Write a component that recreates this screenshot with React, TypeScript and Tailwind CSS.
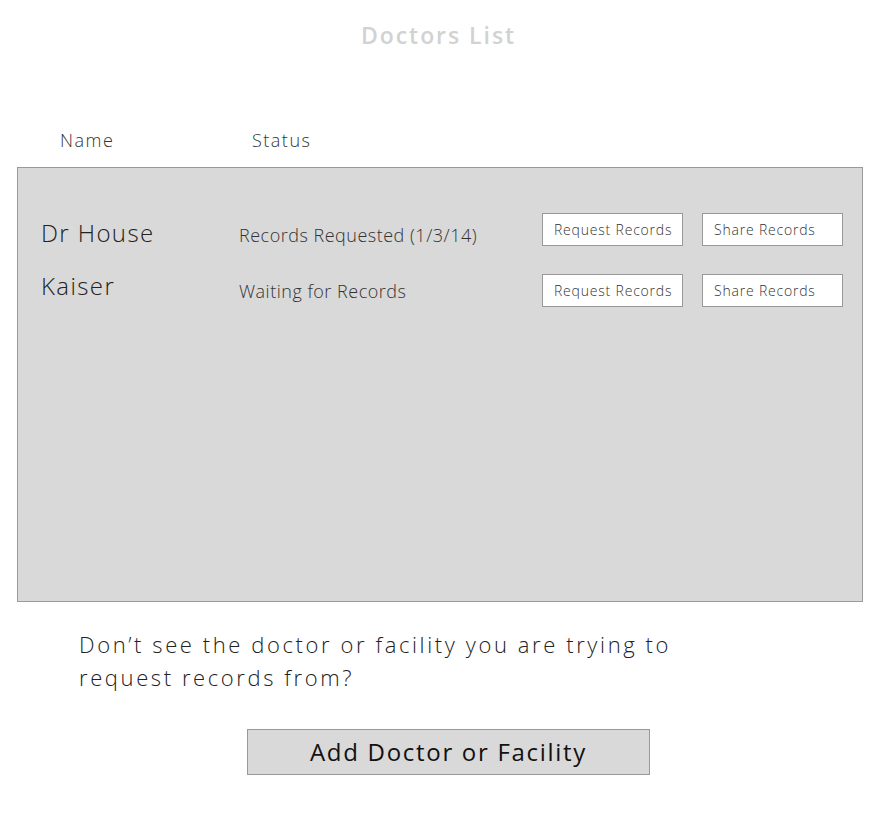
const doctors = [
  { name: "Dr House", status: "Records Requested (1/3/14)", nameCls: "pt-[6px]", statusCls: "pt-[12px]" },
  { name: "Kaiser", status: "Waiting for Records", nameCls: "pb-[10px]", statusCls: "pt-[2px]" },
];

function SmallButton({ label }: { label: string }) {
  return (
    <button className="h-[33px] w-[141px] shrink-0 border border-[#999999] bg-white pl-[11px] text-left text-[14px] tracking-[0.8px] text-[#333333]">
      {label}
    </button>
  );
}

export default function App() {
  return (
    <div className="min-h-[840px] w-[877px] bg-white font-['Open_Sans',sans-serif] font-light text-[#222222]">
      <h1 className="pt-[18px] text-center text-[23px] font-semibold leading-[34px] tracking-[1.95px] text-[#d2d2d2]">
        Doctors List
      </h1>

      <div className="mt-[74px] flex h-[28px] items-center text-[18px] tracking-[1.5px] text-[#333333]">
        <span className="ml-[60px] w-[192px]">Name</span>
        <span>Status</span>
      </div>

      <div className="mt-[13px] ml-[17px] h-[435px] w-[846px] border border-[#999999] bg-[#d9d9d9] pt-[45px] pr-[18px] pl-[23px]">
        {doctors.map((d) => (
          <div key={d.name} className="mb-[28px] flex h-[33px] items-center">
            <span className={`w-[198px] shrink-0 text-[24px] tracking-[1.4px] text-[#222222] ${d.nameCls}`}>{d.name}</span>
            <span className={`w-[303px] shrink-0 text-[18px] tracking-[0.5px] text-[#333333] ${d.statusCls}`}>{d.status}</span>
            <div className="flex gap-[19px]">
              <SmallButton label="Request Records" />
              <SmallButton label="Share Records" />
            </div>
          </div>
        ))}
      </div>

      <p className="mt-[26px] ml-[79px] w-[640px] text-[22px] leading-[33px] tracking-[2.6px] text-[#222222]">
        Don’t see the doctor or facility you are trying to request records from?
      </p>

      <div className="mt-[35px] flex justify-center pl-[20px]">
        <button className="h-[46px] w-[403px] border border-[#999999] bg-[#d9d9d9] text-[24px] font-normal tracking-[1.7px] text-[#111111]">
          Add Doctor or Facility
        </button>
      </div>
    </div>
  );
}
